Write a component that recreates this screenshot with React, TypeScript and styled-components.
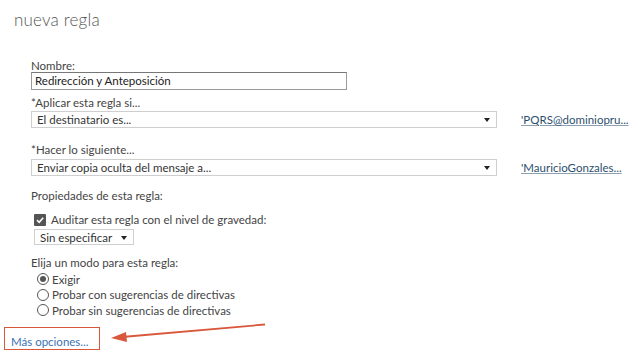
import React from "react";
import styled, { createGlobalStyle } from "styled-components";

const GlobalStyle = createGlobalStyle`
  html, body {
    margin: 0;
    padding: 0;
    background: #ffffff;
  }
  body {
    font-family: Lato, "Liberation Sans", Arial, sans-serif;
    color: #444444;
  }
`;

const Page = styled.div`
  position: relative;
  width: 636px;
  height: 353px;
  overflow: hidden;
  display: flex;
  flex-direction: column;
  padding: 9px 0 0 14px;
  box-sizing: border-box;
`;

const Title = styled.h1`
  margin: 0;
  font-size: 17px;
  line-height: 22px;
  font-weight: 300;
  color: #555555;
  letter-spacing: 0.2px;
`;

const Form = styled.div`
  display: flex;
  flex-direction: column;
  margin: 29px 0 0 17px;
`;

const Label = styled.div<{ $top?: number }>`
  font-size: 11.5px;
  line-height: 12px;
  height: 12px;
  color: #444444;
  margin-top: ${(p) => p.$top ?? 0}px;
`;

const TextInput = styled.div`
  width: 316px;
  height: 18px;
  box-sizing: border-box;
  border: 1px solid #9a9a9a;
  border-top-color: #777777;
  padding: 0 3px;
  font-size: 11.5px;
  line-height: 16px;
  color: #222222;
`;

const ControlRow = styled.div<{ $top: number }>`
  display: flex;
  align-items: center;
  margin-top: ${(p) => p.$top}px;
`;

const Select = styled.div<{ $width: number }>`
  width: ${(p) => p.$width}px;
  height: 17px;
  box-sizing: border-box;
  border: 1px solid #cfcfcf;
  display: flex;
  align-items: center;
  justify-content: space-between;
  padding: 0 6px 0 5px;
  font-size: 11.5px;
  color: #333333;
`;

const Caret = styled.span`
  width: 0;
  height: 0;
  border-left: 3.5px solid transparent;
  border-right: 3.5px solid transparent;
  border-top: 4px solid #222222;
  margin-top: 1px;
`;

const ValueLink = styled.a`
  margin-left: 24px;
  font-size: 11.5px;
  color: #2d4f6e;
  text-decoration: underline;
  text-decoration-color: #8ca0b3;
  white-space: nowrap;
`;

const CheckRow = styled.div`
  display: flex;
  align-items: center;
  gap: 5px;
  height: 12px;
  margin: 12px 0 0 3px;
  font-size: 11.5px;
  line-height: 12px;
`;

const CheckBox = styled.span`
  width: 12px;
  height: 12px;
  border-radius: 1px;
  background: #555555;
  display: flex;
  align-items: center;
  justify-content: center;
`;

const SmallSelect = styled(Select)`
  margin: 3px 0 0 3px;
  height: 16px;
`;

const RadioList = styled.div`
  display: flex;
  flex-direction: column;
  margin: 2.5px 0 0 6px;
`;

const RadioRow = styled.div`
  display: flex;
  align-items: center;
  gap: 3px;
  height: 15.5px;
  font-size: 11.5px;
`;

const Radio = styled.span<{ $checked?: boolean }>`
  width: 10px;
  height: 10px;
  border-radius: 50%;
  border: 1px solid #555555;
  display: flex;
  align-items: center;
  justify-content: center;
  &::after {
    content: "";
    display: ${(p) => (p.$checked ? "block" : "none")};
    width: 6px;
    height: 6px;
    border-radius: 50%;
    background: #555555;
  }
`;

const MoreBox = styled.div`
  align-self: flex-start;
  margin: 9px 0 0 -27px;
  width: 96px;
  height: 23px;
  box-sizing: border-box;
  border: 1.5px solid #d9583b;
  display: flex;
  align-items: center;
  padding: 5px 0 0 6px;
`;

const MoreLink = styled.a`
  font-size: 11.5px;
  color: #3a72b5;
  text-decoration: none;
`;

const ArrowLayer = styled.svg`
  position: absolute;
  left: 0;
  top: 0;
  pointer-events: none;
`;

export default function App() {
  return (
    <>
      <GlobalStyle />
      <Page>
        <Title>nueva regla</Title>
        <Form>
          <Label>Nombre:</Label>
          <TextInput>Redirección y Anteposición</TextInput>

          <Label $top={7}>*Aplicar esta regla si...</Label>
          <ControlRow $top={2}>
            <Select $width={466}>
              El destinatario es...
              <Caret />
            </Select>
            <ValueLink>'PQRS@dominiopru...</ValueLink>
          </ControlRow>

          <Label $top={16}>*Hacer lo siguiente...</Label>
          <ControlRow $top={3}>
            <Select $width={466}>
              Enviar copia oculta del mensaje a...
              <Caret />
            </Select>
            <ValueLink>'MauricioGonzales...</ValueLink>
          </ControlRow>

          <Label $top={14}>Propiedades de esta regla:</Label>
          <CheckRow>
            <CheckBox>
              <svg width="10" height="10" viewBox="0 0 10 10">
                <path d="M2 5.2 L4.2 7.3 L8.2 2.8" fill="none" stroke="#ffffff" strokeWidth="1.6" />
              </svg>
            </CheckBox>
            Auditar esta regla con el nivel de gravedad:
          </CheckRow>
          <SmallSelect $width={100}>
            Sin especificar
            <Caret />
          </SmallSelect>

          <Label $top={12}>Elija un modo para esta regla:</Label>
          <RadioList>
            <RadioRow>
              <Radio $checked />
              Exigir
            </RadioRow>
            <RadioRow>
              <Radio />
              Probar con sugerencias de directivas
            </RadioRow>
            <RadioRow>
              <Radio />
              Probar sin sugerencias de directivas
            </RadioRow>
          </RadioList>

          <MoreBox>
            <MoreLink>Más opciones...</MoreLink>
          </MoreBox>
        </Form>

        <ArrowLayer width="636" height="353" viewBox="0 0 636 353">
          <line x1="265" y1="324.5" x2="122" y2="337" stroke="#d9583b" strokeWidth="1.8" />
          <polygon points="111,338 126,332 127,342" fill="#d9583b" />
        </ArrowLayer>
      </Page>
    </>
  );
}
